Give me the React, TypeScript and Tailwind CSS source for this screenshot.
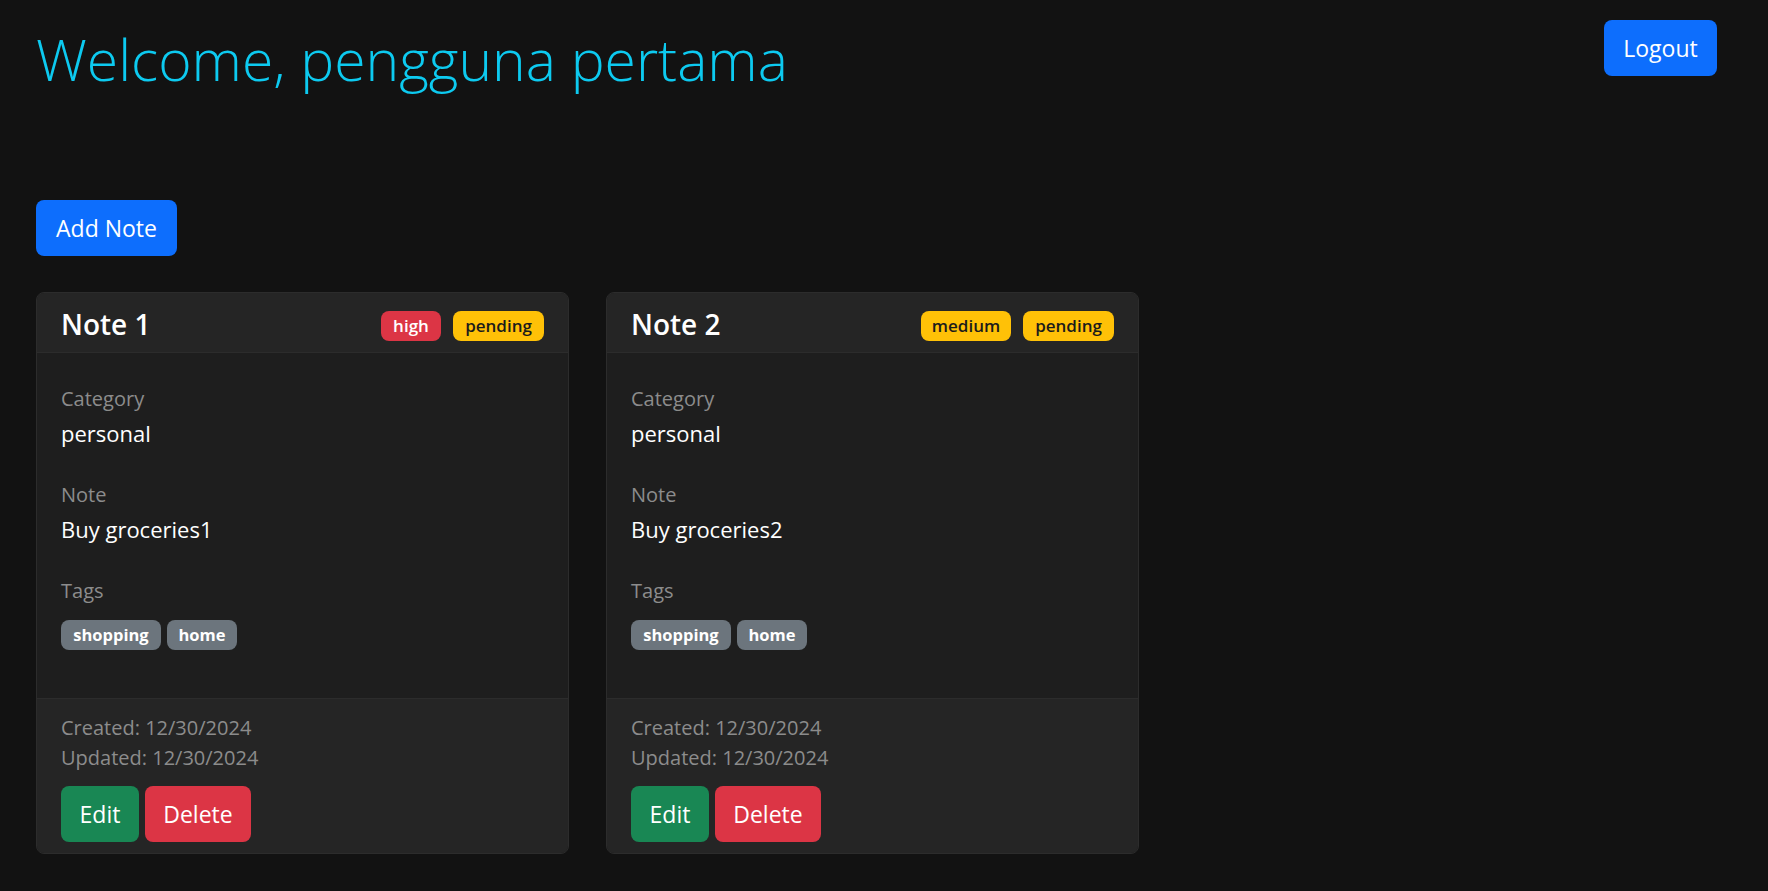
import React from "react";

type Note = {
  title: string;
  priority: string;
  priorityClass: string;
  priorityWidth: string;
  category: string;
  body: string;
};

const notes: Note[] = [
  {
    title: "Note 1",
    priority: "high",
    priorityClass: "bg-[#dc3545] text-white",
    priorityWidth: "w-[60px]",
    category: "personal",
    body: "Buy groceries1",
  },
  {
    title: "Note 2",
    priority: "medium",
    priorityClass: "bg-[#ffc107] text-[#1b1b1b]",
    priorityWidth: "w-[90px]",
    category: "personal",
    body: "Buy groceries2",
  },
];

function NoteCard({ note }: { note: Note }) {
  return (
    <div className="w-[533px] overflow-hidden rounded-[8px] border border-[#2c2c2c] bg-[#1e1e1e]">
      <div className="flex h-[60px] items-center justify-between border-b border-[#2c2c2c] bg-[#252525] px-[24px]">
        <h4 className="pt-[2px] text-[28px] font-semibold leading-none text-white">{note.title}</h4>
        <div className="mt-[6px] flex gap-[12px]">
          <span
            className={`flex h-[30px] items-center justify-center rounded-[8px] text-[17px] font-semibold ${note.priorityWidth} ${note.priorityClass}`}
          >
            {note.priority}
          </span>
          <span className="flex h-[30px] w-[91px] items-center justify-center rounded-[8px] bg-[#ffc107] text-[17px] font-semibold text-[#1b1b1b]">
            pending
          </span>
        </div>
      </div>
      <div className="px-[24px] pb-[48px] pt-[31px]">
        <div className="text-[20px] leading-[30px] text-[#8c8c8c]">Category</div>
        <div className="mt-[3px] text-[22px] leading-[32px] text-white">{note.category}</div>
        <div className="mt-[31px] text-[20px] leading-[30px] text-[#8c8c8c]">Note</div>
        <div className="mt-[3px] text-[22px] leading-[32px] text-white">{note.body}</div>
        <div className="mt-[31px] text-[20px] leading-[30px] text-[#8c8c8c]">Tags</div>
        <div className="mt-[14px] flex gap-[6px]">
          <span className="flex h-[30px] w-[100px] items-center justify-center rounded-[8px] bg-[#6c757d] text-[16.5px] font-bold text-white">
            shopping
          </span>
          <span className="flex h-[30px] w-[70px] items-center justify-center rounded-[8px] bg-[#6c757d] text-[16.5px] font-bold text-white">
            home
          </span>
        </div>
      </div>
      <div className="border-t border-[#2c2c2c] bg-[#252525] px-[24px] pb-[11px] pt-[14px]">
        <div className="text-[20px] leading-[30px] text-[#8c8c8c]">Created: 12/30/2024</div>
        <div className="text-[20px] leading-[30px] text-[#8c8c8c]">Updated: 12/30/2024</div>
        <div className="mt-[13px] flex gap-[6px]">
          <button className="h-[56px] w-[78px] rounded-[8px] bg-[#198754] text-[23px] text-white">Edit</button>
          <button className="h-[56px] w-[106px] rounded-[8px] bg-[#dc3545] text-[23px] text-white">Delete</button>
        </div>
      </div>
    </div>
  );
}

export default function App() {
  return (
    <div className="min-h-screen bg-[#121212] font-['Open_Sans',sans-serif] text-white">
      <div className="px-[36px] pt-[20px]">
        <div className="flex items-start justify-between">
          <h1 className="mt-[5px] text-[57px] font-light leading-[1.2] text-[#0dcaf0]">
            Welcome, pengguna pertama
          </h1>
          <button className="mr-[15px] h-[56px] w-[113px] rounded-[8px] bg-[#0d6efd] text-[23px] text-white">
            Logout
          </button>
        </div>
        <button className="mt-[107px] h-[56px] w-[141px] rounded-[8px] bg-[#0d6efd] text-[23px] text-white">
          Add Note
        </button>
        <div className="mt-[36px] flex gap-[37px]">
          {notes.map((n) => (
            <NoteCard key={n.title} note={n} />
          ))}
        </div>
      </div>
    </div>
  );
}
